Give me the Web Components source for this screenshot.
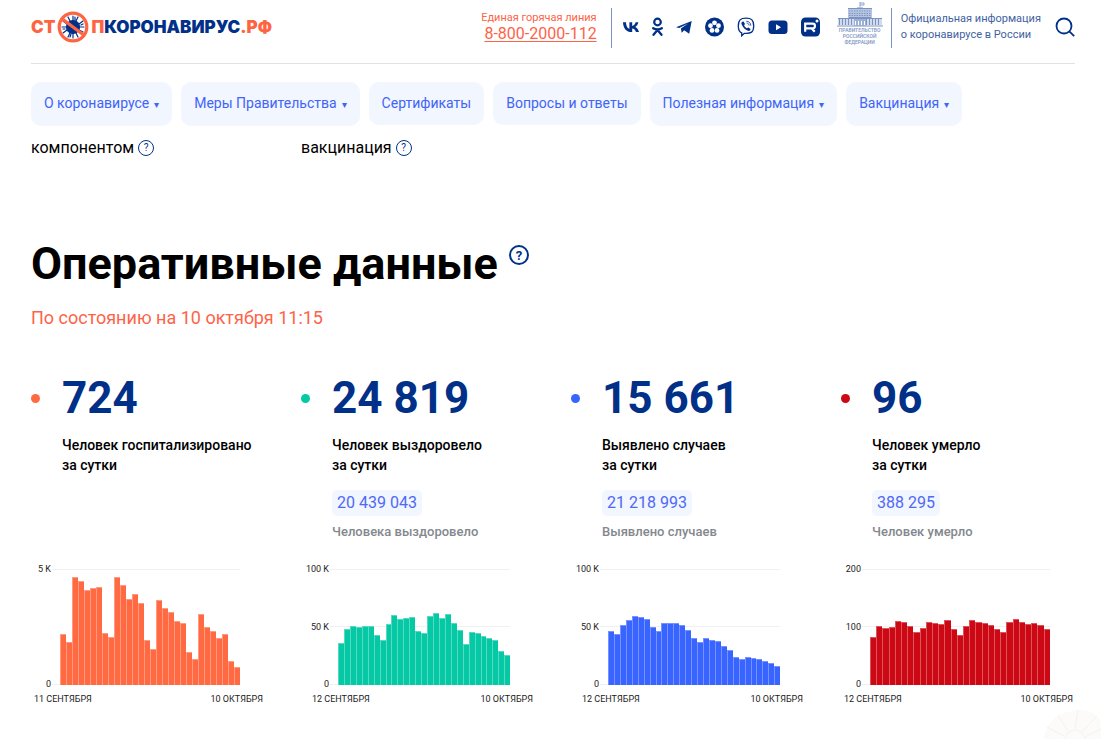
<!DOCTYPE html>
<html lang="ru">
<head>
<meta charset="utf-8">
<meta name="viewport" content="width=device-width, initial-scale=1">
<title>Стопкоронавирус.рф</title>
<style>
  body { margin: 0; background: #fff; color: #000; font-family: Roboto, "Liberation Sans", sans-serif; }
</style>
</head>
<body>
<covid-page></covid-page>

<script>
const define = (name, html, setup) => {
  const template = document.createElement('template');
  template.innerHTML = html;
  customElements.define(name, class extends HTMLElement {
    connectedCallback() {
      if (this.shadowRoot) return;
      const root = this.attachShadow({ mode: 'open' });
      root.append(template.content.cloneNode(true));
      if (setup) setup(this, root);
    }
  });
};

/* Site logo */
define('site-logo', `
<style>
  :host { display: block; }
  a { display: flex; align-items: center; color: #fe6442; text-decoration: none; font: 900 17px/32px Inter, sans-serif; }
  svg { width: 32px; height: 32px; margin: 0 2px; }
  b { color: #003087; font-weight: 900; }
</style>
<a href="#">СТ<svg viewBox="0 0 32 32" aria-hidden="true">
  <g stroke="#003087" stroke-width="1.2" stroke-linecap="round">
    <circle cx="16" cy="16" r="6.5" fill="#003087"/>
    <path d="M16 10V5M19 10l2-4M22 13l4-3M23 16h4M22 19l4 2M19 22l2 4M16 22v5M13 22l-2 4M10 19l-4 3M9 16H5M10 13L6 10M13 10l-2-4M18 9V6M24 14l2-1M14 23l-1 3M8 18l-2 0"/>
  </g>
  <circle cx="16" cy="16" r="13.800" fill="none" stroke="#fe6442" stroke-width="3.2"/>
  <path d="M6 8.500L26 23.500" stroke="#fe6442" stroke-width="3.400"/>
</svg>П<b>КОРОНАВИРУС</b>.РФ</a>`);

/* Social network links */
define('social-links', `
<style>
  :host { display: block; }
  nav { display: flex; align-items: center; gap: 13px; }
  a { display: flex; color: #003087; }
  svg { display: block; height: 20px; fill: currentColor; }
</style>
<nav aria-label="Социальные сети">
  <a href="#" aria-label="ВКонтакте"><svg width="16" viewBox="0 0 16 20"><path d="M8.700 15C3.300 15 .2 11.300 0 5.200h3c.1 4.300 1.900 6.100 3.400 6.500V5.200h2.800v3.700c1.500-.2 3-1.800 3.500-3.700h2.700c-.4 2.300-2 4-3.200 4.700 1.200.6 3 2 3.800 5.100h-3c-.6-1.900-2-3.300-3.800-3.500V15z"/></svg></a>
  <a href="#" aria-label="Одноклассники"><svg width="11" viewBox="0 0 11 20"><circle cx="5.500" cy="5" r="3.300" fill="none" stroke="currentColor" stroke-width="2.200"/><path d="M1.200 11.200q4.300 2.500 8.600 0M5.500 13L1.500 17.800M5.500 13l4 4.800" fill="none" stroke="currentColor" stroke-width="2.300" stroke-linecap="round"/></svg></a>
  <a href="#" aria-label="Телеграм"><svg width="16" viewBox="0 0 16 20"><path d="M0 10.300L15.700 4l-2.500 12.700-5-3.500-2.500 2.500-.8-4.200 7.200-4.900-8.900 4.500z"/></svg></a>
  <a href="#" aria-label="Яндекс Дзен"><svg width="19" viewBox="0 0 19 20"><circle cx="9.500" cy="10" r="9.500"/><g fill="#fff"><circle cx="9.500" cy="5.800" r="2.400"/><circle cx="13.500" cy="8.700" r="2.400"/><circle cx="12" cy="13.400" r="2.400"/><circle cx="7" cy="13.400" r="2.400"/><circle cx="5.500" cy="8.700" r="2.400"/></g></svg></a>
  <a href="#" aria-label="Viber"><svg width="18" viewBox="0 0 18 20"><path d="M9 1.200C3.500 1.200 1.300 3 1.300 9c0 3.800.9 5.900 3.400 6.800v3l2.600-2.500c7 .5 9.400-1.200 9.400-7.300 0-6-2.200-7.800-7.700-7.800z" fill="none" stroke="currentColor" stroke-width="1.300"/><path d="M5.200 4.700l1.300-.3 1.500 2.500-.9 1.300c.5 1.400 1.500 2.500 2.900 3.100l1.300-.9 2.300 1.700-.6 1.500-1.200.5C8 13 5 9.500 4.300 6z"/><path d="M9.300 4.200c2.700.1 4.400 1.800 4.500 4.500M9.600 6c1.500.2 2.300 1 2.500 2.500" fill="none" stroke="currentColor" stroke-width=".8"/></svg></a>
  <a href="#" aria-label="YouTube"><svg width="20" viewBox="0 0 20 20"><rect x=".5" y="3.500" width="19" height="13.500" rx="3.500"/><path d="M8 7.200v6l5-3z" fill="#fff"/></svg></a>
  <a href="#" aria-label="Rutube"><svg width="19" viewBox="0 0 19 20"><rect y=".5" width="19" height="19" rx="4.500"/><path d="M4.200 14.800V6.700h7.500c3 0 3 4.700 0 4.700H4.200m6.500 0l3 3.400" fill="none" stroke="#fff" stroke-width="2.200"/><circle cx="16" cy="4" r="1.500" fill="#fff"/></svg></a>
</nav>`);

/* Government emblem with its caption */
define('gov-logo', `
<style>
  :host { display: block; }
  a { display: flex; flex-direction: column; align-items: center; width: 46px; color: #7b93c3; text-decoration: none; text-align: center; font: 500 5px/6px Roboto, sans-serif; }
  svg { width: 46px; height: 25px; }
  span { white-space: nowrap; }
</style>
<a href="#"><svg viewBox="0 0 46 25" aria-hidden="true">
  <path d="M23 5V0M23 1h4v2h-4" fill="none" stroke="#8da2cc" stroke-width="1"/>
  <path d="M20 5h6v2h9v9h-24V7h9z" fill="#b8c5df"/>
  <path d="M11 6.500h24M12 15.500h22M1 16.500h44M0 24h46" stroke="#7b93c3" stroke-width="1"/>
  <path d="M1 17h44v6H1z" fill="#d2dbeb"/>
  <path d="M12 9h22M12 11.500h22M12 13.500h22" stroke="#7b93c3" stroke-width="1" stroke-dasharray="1.500 1"/>
  <path d="M2 20h42" stroke="#7b93c3" stroke-width="6" stroke-dasharray="1 2"/>
  <path d="M17 17h12v7H17z" fill="#9eb0d3"/><path d="M18 21h10" stroke="#fff" stroke-width="4" stroke-dasharray="1 2"/>
</svg><span>ПРАВИТЕЛЬСТВО</span><span>РОССИЙСКОЙ</span><span>ФЕДЕРАЦИИ</span></a>`);

define('site-header', `
<style>
  :host { display: block; }
  header { display: flex; align-items: flex-start; height: 63px; border-bottom: 1px solid #e2e2e2; }
  site-logo { margin: 11px auto 0 0; }
  .phone { margin-top: 10px; padding-right: 14px; color: #fe6348; text-align: right; font-size: 11px; line-height: 16px; }
  .phone a { display: block; color: inherit; font-size: 16px; line-height: 16px; text-underline-offset: 2px; }
  .rule { flex: none; width: 1px; height: 40px; margin-top: 8px; background: #7b93c3; }
  social-links { margin: 17px 17px 0 11px; }
  gov-logo { margin: 2px 8px 0 0; }
  p { margin: 11px 14px 0 9px; color: #42629f; font-size: 11px; line-height: 16px; white-space: nowrap; }
  button { margin: 17px 0 0; padding: 0; border: 0; background: none; color: #003087; }
  svg { display: block; width: 20px; height: 20px; }
</style>
<header>
  <site-logo></site-logo>
  <div class="phone">Единая горячая линия<a href="tel:88002000112">8-800-2000-112</a></div>
  <div class="rule"></div>
  <social-links></social-links>
  <gov-logo></gov-logo>
  <div class="rule"></div>
  <p>Официальная информация<br>о коронавирусе в России</p>
  <button type="button" aria-label="Поиск"><svg viewBox="0 0 20 20" fill="none" stroke="currentColor" stroke-width="1.800"><circle cx="9" cy="9" r="7.500"/><path d="M14.300 14.300L19.200 19.200"/></svg></button>
</header>`);

define('nav-pill', `
<style>
  :host { display: block; }
  a { display: block; padding: 0 13px; border-radius: 10px; background: #f1f6ff; color: #4264f8; font-size: 14px; line-height: 43px; text-decoration: none; white-space: nowrap; }
  span { margin-left: 5px; font-size: 10px; }
</style>
<a href="#"><slot></slot></a>`, (host, root) => {
  if (host.hasAttribute('menu')) {
    const mark = document.createElement('span');
    mark.textContent = '▾';
    root.querySelector('a').append(mark);
  }
});

/* Round question mark button */
define('help-mark', `
<style>
  :host { display: inline-block; width: 16px; height: 16px; --size: 16px; --mark: 10px; --weight: 400; --line: 1px; }
  :host([large]) { width: 20px; height: 20px; --size: 20px; --mark: 13px; --weight: 700; --line: 2px; }
  button { display: flex; align-items: center; justify-content: center; box-sizing: border-box; width: var(--size); height: var(--size); padding: 0; border: var(--line) solid #003087; border-radius: 50%; background: none; color: #003087; font: var(--weight) var(--mark)/1 Roboto, sans-serif; }
</style>
<button type="button" title="Пояснение">?</button>`);

/* Bar chart: the data property holds the values, the axis top and the tick labels */
define('bar-chart', `
<style>
  :host { display: block; color: #222; font-size: 9px; line-height: 12px; --axis: 20px; }
  :host([wide-axis]) { --axis: 28px; }
  .body { display: flex; margin-right: 25px; }
  .ticks { display: flex; flex-direction: column; justify-content: space-between; width: var(--axis); height: 127px; text-align: right; white-space: nowrap; }
  .plot { flex: 1; display: flex; flex-direction: column; margin: 6px 0 6px 1px; }
  .area { display: flex; align-items: flex-end; height: 115px; padding-left: 8px; border-bottom: 1px solid #f0f0f0; }
  .area { background: linear-gradient(#f0f0f0, #f0f0f0) 0 0 / 100% 1px no-repeat; }
  :host([half]) .area { background: linear-gradient(#f0f0f0, #f0f0f0) 0 0 / 100% 1px no-repeat, linear-gradient(#f0f0f0, #f0f0f0) 0 50% / 100% 1px no-repeat; }
  i { flex: 1; box-sizing: border-box; margin-bottom: -1px; border: solid var(--soft); border-width: 1px 0 0 1px; background: var(--bar); }
  .dates { display: flex; justify-content: space-between; margin: 2px 2px 0 calc(var(--axis) - 17px); }
</style>
<div class="body">
  <div class="ticks"></div>
  <div class="plot"><div class="area"></div></div>
</div>
<div class="dates"><span class="from"></span><span>10 ОКТЯБРЯ</span></div>`, (host, root) => {
  const { values, max, ticks, from } = host.data;
  for (const tick of ticks) {
    const el = document.createElement('span');
    el.textContent = tick;
    root.querySelector('.ticks').append(el);
  }
  for (const value of values) {
    const bar = document.createElement('i');
    bar.style.height = Math.round(value / max * 115) + 1 + 'px';
    root.querySelector('.area').append(bar);
  }
  root.querySelector('.from').textContent = from;
});

define('stat-card', `
<style>
  :host { display: flex; flex-direction: column; }
  .info { display: grid; grid-template: 50px 1fr / 31px 1fr; align-items: center; height: 190px; }
  .dot { width: 9px; height: 9px; border-radius: 50%; background: var(--bar); }
  strong { color: #003087; font-size: 44px; line-height: 50px; white-space: nowrap; }
  .text { grid-column: 2; align-self: start; }
  .label { margin: 12px 0 15px; font-size: 14px; font-weight: 500; line-height: 20px; white-space: nowrap; }
  .total { display: inline-block; padding: 0 5px; border-radius: 5px; background: #f1f6ff; color: #5068f4; font-size: 16px; line-height: 26px; }
  .note { margin-top: 7px; color: #83888e; font-size: 13px; font-weight: 500; line-height: 18px; white-space: nowrap; }
</style>
<section class="info">
  <span class="dot"></span><strong><slot name="value"></slot></strong>
  <div class="text">
    <div class="label"><slot name="label"></slot><br>за сутки</div>
    <span class="total"><slot name="total"></slot></span>
    <div class="note"><slot name="note"></slot></div>
  </div>
</section>
<slot></slot>`, (host, root) => {
  if (!host.querySelector('[slot=total]')) root.querySelector('.total').remove();
});

define('stat-grid', `
<style>
  :host { display: grid; grid-template-columns: repeat(4, 1fr); gap: 36px; }
</style>`, (host, root) => {
  const cards = [
    { value: '724', label: 'Человек госпитализировано', bar: '#ff6a43', soft: '#ff9b80', from: '11 СЕНТЯБРЯ', max: 5000, ticks: ['5 K', '0'],
      values: [2190,1840,4650,4480,4100,4170,4220,2220,2040,4650,4300,3710,3910,3520,1930,1520,3650,3290,3150,2720,2640,1380,1070,3030,2480,2290,2010,2170,1010,724] },
    { value: '24 819', label: 'Человек выздоровело', total: '20 439 043', note: 'Человека выздоровело', bar: '#04c9a4', soft: '#56dbc2', wide: true, from: '12 СЕНТЯБРЯ', max: 100, ticks: ['100 K', '50 K', '0'],
      values: [35.6,48.1,50.4,49.6,50,50,42.3,38.5,52.2,60,56.8,57.4,58.3,45.8,44.1,59.4,61.4,57.7,61.2,52.8,46.7,35.1,45.2,44.6,41.4,39.7,38,28.7,24.8] },
    { value: '15 661', label: 'Выявлено случаев', total: '21 218 993', note: 'Выявлено случаев', bar: '#3864ff', soft: '#7893ff', wide: true, from: '12 СЕНТЯБРЯ', max: 100, ticks: ['100 K', '50 K', '0'],
      values: [46.4,43.8,51.6,56,59.1,58,56.5,49.3,46.4,52.8,53.3,53,51.3,46.7,40,36.2,40,38.5,37.1,33,29.9,23.8,21.4,23.5,22.9,22,20.3,18.5,15.7] },
    { value: '96', label: 'Человек умерло', total: '388 295', note: 'Человек умерло', bar: '#cb0813', soft: '#dc555d', from: '12 СЕНТЯБРЯ', max: 200, ticks: ['200', '100', '0'],
      values: [81,101,98,99,110,107,101,90,98,107,106,104,111,95,85,101,111,108,106,103,96,90,107,113,108,104,106,102,96] }
  ];
  for (const card of cards) {
    const el = document.createElement('stat-card');
    el.style.setProperty('--bar', card.bar);
    el.style.setProperty('--soft', card.soft);
    for (const part of ['value', 'label', 'total', 'note']) {
      if (!card[part]) continue;
      const text = document.createElement('span');
      text.slot = part;
      text.textContent = card[part];
      el.append(text);
    }
    const chart = document.createElement('bar-chart');
    chart.data = card;
    chart.toggleAttribute('wide-axis', !!card.wide);
    chart.toggleAttribute('half', card.ticks.length === 3);
    el.append(chart);
    root.append(el);
  }
});

/* Faint ornament in the lower right corner of the window */
define('corner-ornament', `
<style>
  :host { position: fixed; right: 0; bottom: 0; width: 57px; height: 30px; pointer-events: none; }
  svg { display: block; }
</style>
<svg width="57" height="30" viewBox="0 0 57 30" aria-hidden="true" fill="none">
  <path d="M0 30C2 12 15 3 34 1 46 0 57 8 57 15V30z" fill="#fdfbf9"/>
  <g stroke="#f5f1ee" stroke-width="1"><circle cx="31" cy="31" r="10"/><path d="M31 20L34 1M24 22L14 6M20 27L3 18M38 23L53 7M41 28L57 20"/></g>
</svg>`);

define('covid-page', `
<style>
  :host { display: block; padding: 0 26px 24px 31px; }
  .menu { display: flex; gap: 9px; padding-top: 18px; }
  .terms { display: grid; grid-template-columns: repeat(4, 1fr); gap: 36px; padding-top: 11px; font-size: 16px; line-height: 22px; }
  .terms div { display: flex; align-items: center; gap: 4px; }
  .title { display: flex; align-items: flex-start; gap: 11px; padding-top: 78px; }
  h1 { margin: 0; font-size: 45px; font-weight: 700; line-height: 54px; }
  .title help-mark { margin-top: 8px; }
  .date { margin: 15px 0 43px; color: #fe6348; font-size: 18px; line-height: 24px; }
</style>
<site-header></site-header>
<nav class="menu">
  <nav-pill menu>О коронавирусе</nav-pill>
  <nav-pill menu>Меры Правительства</nav-pill>
  <nav-pill>Сертификаты</nav-pill>
  <nav-pill>Вопросы и ответы</nav-pill>
  <nav-pill menu>Полезная информация</nav-pill>
  <nav-pill menu>Вакцинация</nav-pill>
</nav>
<main>
  <div class="terms">
    <div>компонентом <help-mark></help-mark></div>
    <div>вакцинация <help-mark></help-mark></div>
  </div>
  <div class="title"><h1>Оперативные данные</h1><help-mark large></help-mark></div>
  <p class="date">По состоянию на 10 октября 11:15</p>
  <stat-grid></stat-grid>
</main>
<corner-ornament></corner-ornament>`);
</script>
</body>
</html>
